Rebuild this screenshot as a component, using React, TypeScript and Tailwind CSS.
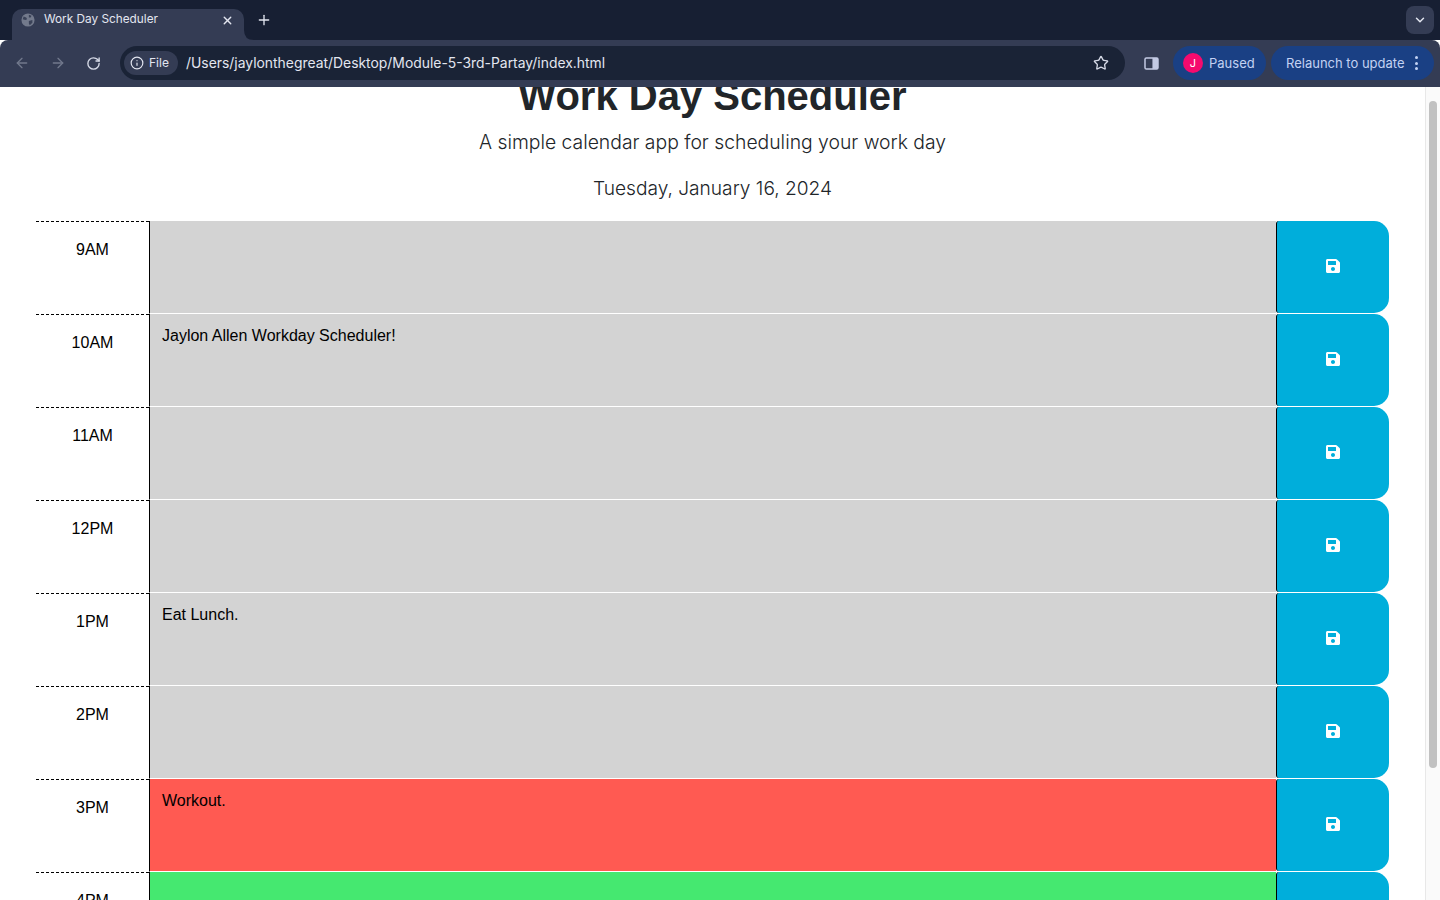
import { ArrowLeft, ArrowRight, RotateCw, Info, Star, Plus, X, ChevronDown } from "lucide-react";
import { FaSave } from "react-icons/fa";

const rows = [
  { h: "9AM", t: "", bg: "bg-[#d3d3d3]" },
  { h: "10AM", t: "Jaylon Allen Workday Scheduler!", bg: "bg-[#d3d3d3]" },
  { h: "11AM", t: "", bg: "bg-[#d3d3d3]" },
  { h: "12PM", t: "", bg: "bg-[#d3d3d3]" },
  { h: "1PM", t: "Eat Lunch.", bg: "bg-[#d3d3d3]" },
  { h: "2PM", t: "", bg: "bg-[#d3d3d3]" },
  { h: "3PM", t: "Workout.", bg: "bg-[#ff5a52]" },
  { h: "4PM", t: "", bg: "bg-[#45e870]" },
];

function Row({ h, t, bg }: { h: string; t: string; bg: string }) {
  return (
    <div className="flex h-[93px] shrink-0">
      <div className="w-[113px] shrink-0 border-t border-dashed border-black pt-[16px] text-center text-[16px] leading-[24px] text-black">
        {h}
      </div>
      <div className={`${bg} flex-1 border-l border-black border-b border-b-white pl-3 pt-[10px] text-[16px] leading-[24px] text-black`}>
        {t}
      </div>
      <button className="mb-px flex w-[113px] shrink-0 items-center justify-center rounded-l-[3px] rounded-r-[15px] border-l border-black bg-[#00aedb] pb-[2px] text-white">
        <FaSave size={16} />
      </button>
    </div>
  );
}

export default function App() {
  return (
    <div className="flex h-[900px] w-[1440px] flex-col overflow-hidden bg-white font-['Liberation_Sans',Arial,sans-serif]">
      {/* Tab strip */}
      <div className="flex h-[40px] shrink-0 items-end bg-[#171f33] pl-3 font-['Inter',sans-serif]">
        <div className="relative flex h-[31px] w-[232px] items-center rounded-t-[10px] bg-[#343c54] pb-[9px] pl-[9px] pr-[10px] text-[11.8px] text-[#e3e6f0]">
          <svg viewBox="0 0 16 16" className="h-[14px] w-[14px] shrink-0">
            <circle cx="8" cy="8" r="7.5" fill="#737a8c" />
            <path d="M3 4l3 1 1 2-2 1-3-1zM9 2l3 1-1 2-2 0zM9 9l4-1 0 3-3 3-1-2z" fill="#3a4258" />
          </svg>
          <span className="ml-[9px] flex-1 whitespace-nowrap">Work Day Scheduler</span>
          <X size={13} strokeWidth={2.5} className="text-[#e3e6f0]" />
          <svg viewBox="0 0 10 10" className="absolute -bottom-0 -right-[10px] h-[10px] w-[10px]">
            <path d="M0 0Q0 10 10 10L0 10Z" fill="#343c54" />
          </svg>
        </div>
        <div className="mb-[12px] ml-[12px] text-[#e3e6f0]">
          <Plus size={16} strokeWidth={2} />
        </div>
        <div className="flex-1" />
        <div className="mb-[6px] mr-[6px] flex h-[28px] w-[28px] items-center justify-center rounded-[8px] bg-[#343c54] text-[#e3e6f0]">
          <ChevronDown size={14} strokeWidth={2.5} />
        </div>
      </div>

      {/* Toolbar */}
      <div className="flex h-[47px] shrink-0 items-center rounded-t-[8px] bg-[#343c54] pb-[1px] pl-[14px] pr-[6px] font-['Inter',sans-serif]">
        <ArrowLeft size={16} className="text-[#71788c]" />
        <ArrowRight size={16} className="ml-[20px] text-[#71788c]" />
        <RotateCw size={15} strokeWidth={2.2} className="ml-[20px] text-[#d5d9e6]" />
        <div className="ml-[19px] flex h-[34px] w-[1005px] items-center rounded-full bg-[#1a2336] pl-[4px] pr-[16px]">
          <div className="flex h-[24px] w-[54px] items-center rounded-full bg-[#343c54] pl-[6px] text-[12px] text-[#e3e6f0]">
            <Info size={14} />
            <span className="ml-[5px]">File</span>
          </div>
          <span className="ml-[8px] flex-1 whitespace-nowrap text-[13.9px] text-[#e3e6f0]">
            /Users/jaylonthegreat/Desktop/Module-5-3rd-Partay/index.html
          </span>
          <Star size={16} strokeWidth={2} className="text-[#d5d9e6]" />
        </div>
        <svg viewBox="0 0 16 14" className="ml-[19px] h-[13px] w-[15px]">
          <rect x="1" y="1" width="14" height="12" rx="1.5" fill="none" stroke="#c3cae4" strokeWidth="1.6" />
          <rect x="9" y="1" width="6" height="12" fill="#c3cae4" />
        </svg>
        <div className="ml-[14px] flex h-[34px] w-[93px] items-center rounded-full bg-[#1a4084] pl-[10px] text-[13px] text-[#c3d2f3]">
          <span className="flex h-[20px] w-[20px] items-center justify-center rounded-full bg-[#f50a6e] text-[11px] text-white">J</span>
          <span className="ml-[6px] mt-px">Paused</span>
        </div>
        <div className="ml-[5px] flex h-[34px] w-[163px] items-center rounded-full bg-[#1a4084] pl-[15px] text-[13px] text-[#c3d2f3]">
          <span className="mt-px whitespace-nowrap">Relaunch to update</span>
          <span className="ml-[10px] flex flex-col gap-[2.5px]">
            <i className="h-[3px] w-[3px] rounded-full bg-[#c3d2f3]" />
            <i className="h-[3px] w-[3px] rounded-full bg-[#c3d2f3]" />
            <i className="h-[3px] w-[3px] rounded-full bg-[#c3d2f3]" />
          </span>
        </div>
      </div>

      {/* Viewport */}
      <div className="flex flex-1 overflow-hidden">
        <div className="flex-1 overflow-hidden">
          <div className="-mt-[15px] flex flex-col">
            <h1 className="text-center text-[40px] font-bold leading-[48px] text-[#212529]">Work Day Scheduler</h1>
            <p className="mt-[7px] text-center font-['Inter',sans-serif] text-[19.33px] font-light leading-[30px] text-[#212529]">
              A simple calendar app for scheduling your work day
            </p>
            <p className="mt-[16px] text-center font-['Inter',sans-serif] text-[19.15px] font-light leading-[30px] text-[#212529]">Tuesday, January 16, 2024</p>
            <div className="mx-[36px] mt-[18px] flex flex-col">
              {rows.map((r) => (
                <Row key={r.h} {...r} />
              ))}
            </div>
          </div>
        </div>
        <div className="w-[15px] shrink-0 border-l border-[#e8e8e8] bg-[#fafafa] pl-[3px] pt-[14px]">
          <div className="h-[667px] w-[8px] rounded-full bg-[#c1c1c1]" />
        </div>
      </div>
    </div>
  );
}
